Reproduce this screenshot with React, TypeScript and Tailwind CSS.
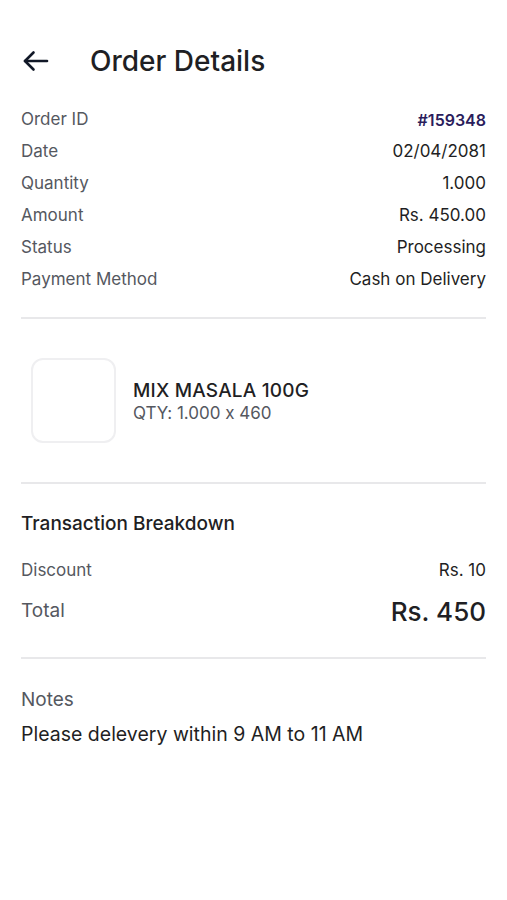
import React from 'react';

const details = [
  { label: 'Order ID', value: '#159348', accent: true },
  { label: 'Date', value: '02/04/2081' },
  { label: 'Quantity', value: '1.000' },
  { label: 'Amount', value: 'Rs. 450.00' },
  { label: 'Status', value: 'Processing' },
  { label: 'Payment Method', value: 'Cash on Delivery' },
];

const BackArrow = () => (
  <svg width="28" height="24" viewBox="0 0 28 24" fill="none" stroke="#111827" strokeWidth="2.6" strokeLinecap="round" strokeLinejoin="round">
    <path d="M26 12H4" />
    <path d="M12.5 3.5 4 12l8.5 8.5" />
  </svg>
);

const Divider = () => <div className="h-[2px] bg-[#e8e8ea]" />;

export default function App() {
  return (
    <div
      className="min-h-[900px] bg-white px-[21px] text-[#1f1f24] [font-feature-settings:'calt'_0]"
      style={{ fontFamily: 'Inter, "Noto Sans", sans-serif' }}
    >
      <header className="flex items-center h-[60px] mt-[31px]">
        <button className="w-[28px]">
          <BackArrow />
        </button>
        <h1 className="ml-[41px] text-[28px] font-medium">Order Details</h1>
      </header>

      <div className="mt-[13px] flex flex-col">
        {details.map(d => (
          <div key={d.label} className="flex items-center justify-between h-[32px] text-[17px]">
            <span className="text-[#55585f]">{d.label}</span>
            <span className={d.accent ? 'text-[16px] font-semibold text-[#2b1d5c]' : 'text-[#1f1f24]'}>{d.value}</span>
          </div>
        ))}
      </div>

      <div className="mt-[21px]">
        <Divider />
      </div>

      <div className="flex items-center py-[39px] pl-[10px]">
        <div className="w-[85px] h-[85px] rounded-[12px] border-2 border-[#efeff1]" />
        <div className="ml-[17px] flex flex-col">
          <span className="text-[19px] font-medium leading-[24px] tracking-[0.2px]">MIX MASALA 100G</span>
          <span className="text-[17px] leading-[20px] text-[#55585f]">QTY: 1.000 x 460</span>
        </div>
      </div>

      <Divider />

      <div className="pt-[26px]">
        <h2 className="text-[19px] font-medium leading-[28px]">Transaction Breakdown</h2>
        <div className="mt-[19px] flex items-center justify-between h-[28px] text-[17px]">
          <span className="text-[#55585f]">Discount</span>
          <span>Rs. 10</span>
        </div>
        <div className="mt-[9px] flex items-center justify-between h-[34px]">
          <span className="text-[19px] text-[#55585f]">Total</span>
          <span className="text-[26px] font-medium">Rs. 450</span>
        </div>
      </div>

      <div className="mt-[29px]">
        <Divider />
      </div>

      <div className="pt-[27px]">
        <p className="text-[19px] text-[#55585f] leading-[28px]">Notes</p>
        <p className="mt-[6px] text-[19.5px] leading-[28px]">Please delevery within 9 AM to 11 AM</p>
      </div>
    </div>
  );
}
